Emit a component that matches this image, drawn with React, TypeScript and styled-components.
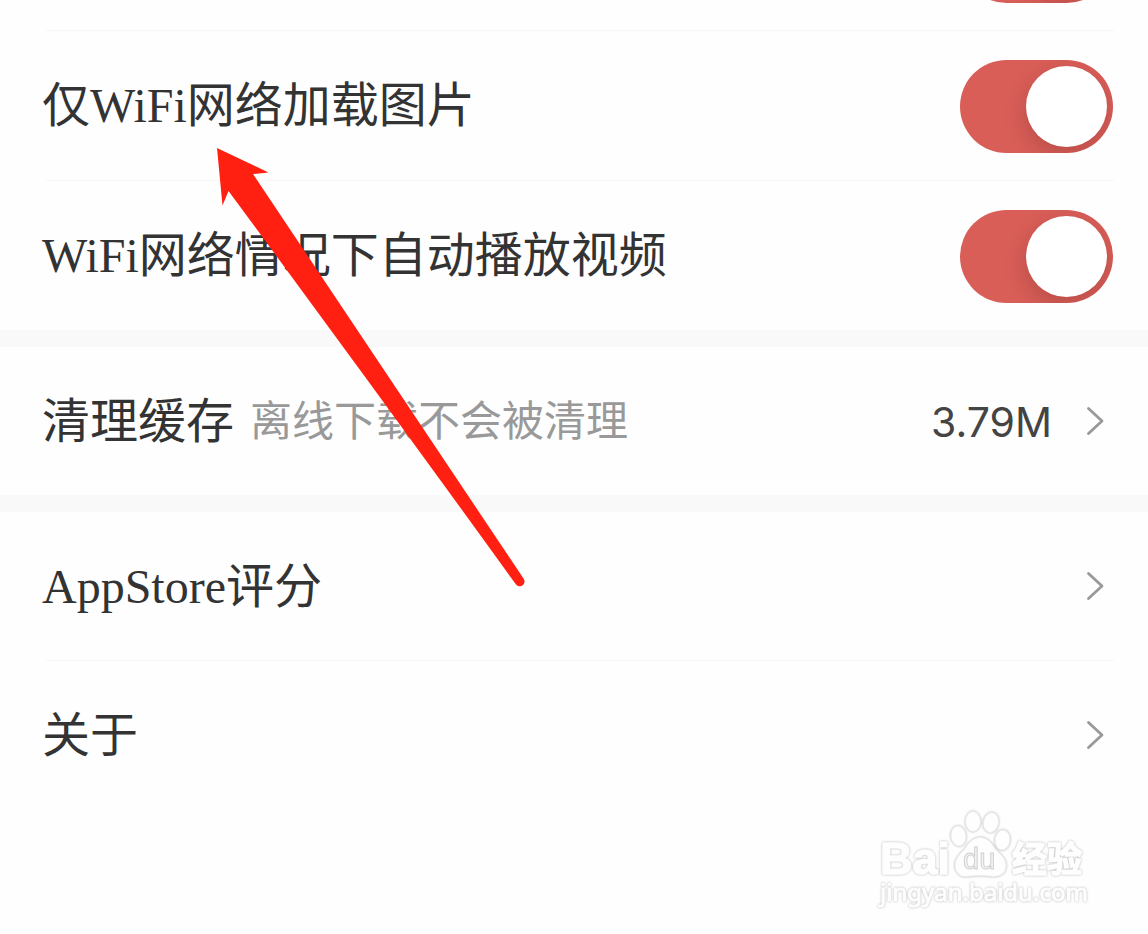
import React, { useState } from "react";
import styled, { createGlobalStyle } from "styled-components";

const GlobalStyle = createGlobalStyle`
  * { box-sizing: border-box; }
  body { margin: 0; background: #fefefe; }
`;

const Page = styled.main`
  position: relative;
  min-height: 100vh;
  overflow: hidden;
  background: #fefefe;
  color: #333;
  font-family: "Liberation Serif", "Noto Sans CJK SC", serif;
  font-size: 48px;
  line-height: 70px;
`;

const Group = styled.section`
  border-bottom: 1px solid #fcfcfc;
`;

const Band = styled.div`
  height: 17px;
  background: #f9f9f9;
`;

const Divider = styled.hr`
  height: 1px;
  margin: 0 34px 0 46px;
  border: 0;
  background: #f6f6f6;
`;

const ToggleRow = styled.label`
  display: flex;
  align-items: center;
  justify-content: space-between;
  height: 149px;
  padding: 0 35px 0 42px;
`;

const ClippedRow = styled.div`
  display: flex;
  align-items: flex-end;
  justify-content: flex-end;
  height: 30px;
  padding: 0 35px 27px 42px;
`;

const LinkRow = styled.a`
  display: flex;
  align-items: center;
  height: 148px;
  padding: 0 44px 0 42px;
  color: inherit;
  text-decoration: none;
`;

const Label = styled.span`
  padding-top: 2px;
`;

const Hint = styled.span`
  margin-left: 16px;
  padding-top: 2px;
  color: #999;
  font-size: 42px;
`;

const Trailing = styled.span`
  display: flex;
  align-items: center;
  gap: 34px;
  margin-left: auto;
`;

const Value = styled.span`
  padding-top: 2px;
  color: #444;
  font-family: Inter, "Liberation Sans", sans-serif;
  font-size: 41px;
`;

const Switch = styled.input`
  appearance: none;
  display: flex;
  flex: none;
  align-items: center;
  width: 153px;
  height: 93px;
  margin: 2px 0 0;
  padding: 0 6px;
  overflow: hidden;
  border-radius: 47px;
  background: #ddd;
  cursor: pointer;

  &::before {
    content: "";
    width: 81px;
    height: 81px;
    border-radius: 50%;
    background: #fff;
    box-shadow: 0 8px 22px rgba(70, 20, 20, 0.22);
  }

  &:checked {
    justify-content: flex-end;
    background: #d95e58;
  }
`;

const Footer = styled.footer`
  display: flex;
  justify-content: flex-end;
  padding-right: 58px;
`;

const Mark = styled.svg`
  filter: drop-shadow(0 0 1px #b4b4b4);
`;

const Pointer = styled.svg`
  position: absolute;
  top: 140px;
  left: 210px;
  pointer-events: none;
`;

function Chevron() {
  return (
    <svg width="18" height="30" viewBox="0 0 18 30" fill="none" aria-hidden="true">
      <path d="M2.5 2.5 16 15 2.5 27.5" stroke="#999" strokeWidth="2.8" strokeLinecap="round" strokeLinejoin="round" />
    </svg>
  );
}

function Toggle({ text }: { text: string }) {
  const [on, setOn] = useState(true);
  return (
    <ToggleRow>
      <span>{text}</span>
      <Switch type="checkbox" checked={on} onChange={() => setOn(!on)} />
    </ToggleRow>
  );
}

function Item({ text, hint, value }: { text: string; hint?: string; value?: string }) {
  return (
    <LinkRow href="#">
      <Label>{text}</Label>
      {hint && <Hint>{hint}</Hint>}
      <Trailing>
        {value && <Value>{value}</Value>}
        <Chevron />
      </Trailing>
    </LinkRow>
  );
}

function Watermark() {
  return (
    <Mark width="220" height="104" viewBox="870 810 220 104" role="img" aria-label="Baidu 经验">
      <g fill="#fefefe" stroke="#ececec" strokeWidth="1" strokeLinejoin="round">
        <ellipse cx="958.5" cy="836" rx="7.5" ry="10" transform="rotate(-8 958.5 836)" />
        <ellipse cx="973" cy="821.5" rx="7.5" ry="10" />
        <ellipse cx="991" cy="822.5" rx="7.5" ry="10" transform="rotate(12 991 822.5)" />
        <ellipse cx="1002.5" cy="840" rx="7.5" ry="10" transform="rotate(6 1002.5 840)" />
        <path d="M980 837.500c8 0 11 5 15 11 4 5 11 9 11 17 0 7-5 11-12 11-5 0-9-1-14-1s-10 1-15 1c-6 0-10-5-10-11 0-8 6-12 10-17 4-6 8-11 15-11z" />
      </g>
      <g fill="#fefefe" stroke="#fefefe" strokeWidth="1.5" strokeLinejoin="round" fontWeight="700">
        <text x="880" y="874" fontSize="45" fontFamily="Liberation Sans, sans-serif">Bai</text>
        <text x="1012" y="872" fontSize="35" fontFamily="Noto Sans CJK SC, sans-serif">经验</text>
        <text x="880" y="901" fontSize="24" fontWeight="400" strokeWidth="1" fontFamily="Noto Sans, sans-serif">jingyan.baidu.com</text>
      </g>
      <text x="963" y="869" fontSize="29" fill="#f4f4f4" stroke="#cfcfcf" strokeWidth="1" fontFamily="Liberation Sans, sans-serif">du</text>
    </Mark>
  );
}

export default function App() {
  const [on, setOn] = useState(true);
  return (
    <>
      <GlobalStyle />
      <Page>
        <ClippedRow>
          <Switch type="checkbox" aria-label="推送" checked={on} onChange={() => setOn(!on)} />
        </ClippedRow>
        <Divider />
        <Toggle text="仅WiFi网络加载图片" />
        <Divider />
        <Toggle text="WiFi网络情况下自动播放视频" />
        <Band />
        <Item text="清理缓存" hint="离线下载不会被清理" value="3.79M" />
        <Band />
        <Group>
          <Item text="AppStore评分" />
          <Divider />
          <Item text="关于" />
        </Group>
        <Footer>
          <Watermark />
        </Footer>
        <Pointer width="320" height="450" viewBox="210 140 320 450" aria-hidden="true">
          <path
            d="M217 148 268.500 172.500 253 174Q388 376 523.500 578.500A4.600 4.600 0 0 1 516 584.500Q374 388 228.500 191L222.500 205.500Z"
            fill="#ff2012"
          />
        </Pointer>
      </Page>
    </>
  );
}
